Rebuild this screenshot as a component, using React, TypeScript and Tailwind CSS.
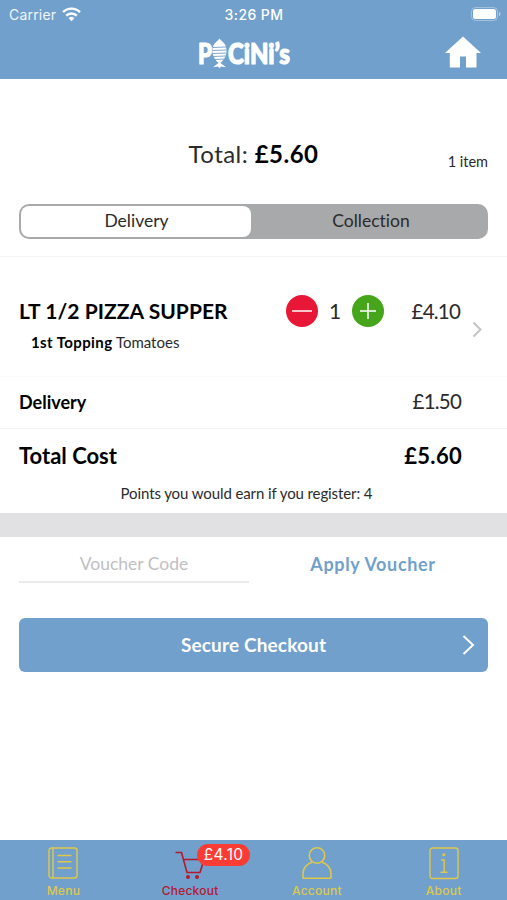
import { useState } from "react";
import type { ReactNode } from "react";

// ---------------------------------------------------------ICONS
const WifiIcon = () => (
  <svg width="19" height="15" viewBox="0 0 19 15" fill="none" stroke="white" strokeWidth="2.4">
    <path d="M1 5.2a12 12 0 0 1 17 0" />
    <path d="M4.2 8.7a7.5 7.5 0 0 1 10.6 0" />
    <path d="M9.5 14.2 6.6 11.2a4.2 4.2 0 0 1 5.8 0z" fill="white" stroke="none" />
  </svg>
);

const BatteryIcon = () => (
  <svg width="30" height="14" viewBox="0 0 30 14">
    <rect x="0.5" y="0.5" width="26" height="13" rx="4" fill="none" stroke="white" strokeOpacity="0.35" />
    <rect x="2" y="2" width="23" height="10" rx="2.5" fill="white" />
    <path d="M28 4.8c2 .8 2 3.6 0 4.4z" fill="white" fillOpacity="0.5" />
  </svg>
);

const HomeIcon = () => (
  <svg width="36" height="32" viewBox="0 0 36 32" fill="white">
    <path d="M18 0.5 36 17h-4.5v14.5H21V20.5h-6v11H4.8V17H0z" />
  </svg>
);

const Logo = () => (
  <svg
    width="98"
    height="46"
    viewBox="0 -4 98 46"
    fill="white"
    stroke="white"
    fontFamily="Lato, sans-serif"
    fontWeight="900"
    strokeWidth="1.2"
    strokeLinejoin="round"
  >
    <text x="2" y="27" fontSize="28" textLength="14" lengthAdjust="spacingAndGlyphs">P</text>
    <text x="32" y="27" fontSize="28" textLength="62" lengthAdjust="spacingAndGlyphs">CiNi’s</text>
    <path
      d="M23.500 1.500c1.500 2.500 7 4.500 7 12 0 6-3 10-6 12.500l5.500 4.200-5-.6-1.500 1.700-1.500-1.700-5 .6 5.500-4.200c-3-2.500-6-6.500-6-12.500 0-7.500 5.500-9.500 7-12z"
      stroke="none"
    />
    <path
      d="M17 10.500 30 10M16.500 13.500l14-.5M16.500 16.500l14-.5M17 19.500l13-.5M18.500 22.500l10.500-.5"
      stroke="#71a0cd"
      strokeWidth="0.9"
    />
  </svg>
);

const MenuIcon = () => (
  <svg width="30" height="33" viewBox="0 0 30 33" fill="none" stroke="currentColor" strokeWidth="1.400">
    <rect x="1" y="1" width="28" height="30" rx="2.500" />
    <path d="M5 1v30M9.500 8.500h14M9.500 14.800h14M9.500 21h14" />
  </svg>
);

const CartIcon = () => (
  <svg width="30" height="33" viewBox="0 0 30 33" fill="none" stroke="currentColor" strokeWidth="1.600">
    <path d="M0.500 5.500H6.500L12 25.500h13.500M8.500 12.500H29l-4 13" />
    <circle cx="13" cy="30" r="2" fill="currentColor" stroke="none" />
    <circle cx="22" cy="30" r="2" fill="currentColor" stroke="none" />
  </svg>
);

const AccountIcon = () => (
  <svg width="30" height="33" viewBox="0 0 30 33" fill="none" stroke="currentColor" strokeWidth="1.600">
    <circle cx="15" cy="8.500" r="7.700" />
    <path d="M10.500 15C4.500 17 1 21.500 1 27v3.500q0 .8.800.8h26.400q.8 0 .8-.8V27c0-5.500-3.500-10-9.500-12" />
  </svg>
);

const AboutIcon = () => (
  <svg width="30" height="33" viewBox="0 0 30 33" fill="none" stroke="currentColor" strokeWidth="1.400">
    <rect x="1" y="1" width="28" height="30.500" rx="2.500" />
    <path d="M12 13h3.200v12M11.500 25.200h7" />
    <circle cx="14.800" cy="7.700" r="1.500" fill="currentColor" stroke="none" />
  </svg>
);

// ---------------------------------------------------------COMPONENTS
const TabItem = ({
  label,
  icon,
  badge,
  active,
}: {
  label: string;
  icon: ReactNode;
  badge?: string;
  active?: boolean;
}) => (
  <button
    className={`flex flex-1 flex-col items-center pt-[7px] ${active ? "text-[#b5182f]" : "text-[#dfc84a]"}`}
  >
    <span className="relative">
      {icon}
      {badge && (
        <span className="absolute -top-[3px] left-[22px] flex h-[22px] w-[53px] items-center justify-center rounded-full bg-[#fb3c35] font-[Inter] text-[15.500px] tracking-[0.3px] text-white">
          {badge}
        </span>
      )}
    </span>
    <span className="mt-[3px] font-[Inter] text-[12px] leading-[16px] font-medium tracking-[0.25px]">
      {label}
    </span>
  </button>
);

export default function App() {
  const [method, setMethod] = useState("Delivery");
  const [qty, setQty] = useState(1);
  const [voucher, setVoucher] = useState("");

  return (
    <div className="flex h-[900px] w-[507px] flex-col overflow-hidden bg-white font-[Lato,sans-serif] text-[#2b2b2b] [font-variant-ligatures:none]">
      <header className="h-[79px] shrink-0 bg-[#71a0cd]">
        <div className="grid h-[28px] grid-cols-[1fr_auto_1fr] items-center pr-[6px] pl-[9px] font-[Inter] text-[14px] text-white">
          <div className="flex items-center gap-[6px]">
            <span className="tracking-[0.2px] opacity-90">Carrier</span>
            <WifiIcon />
          </div>
          <span className="pr-[2px] text-center font-medium tracking-[0.4px]">3:26 PM</span>
          <div className="flex justify-end">
            <BatteryIcon />
          </div>
        </div>
        <div className="grid h-[51px] grid-cols-[1fr_98px_1fr] pr-[26px] pl-[9px]">
          <div />
          <div className="pt-[5px]">
            <Logo />
          </div>
          <button className="self-start justify-self-end pt-[8px]">
            <HomeIcon />
          </button>
        </div>
      </header>

      <section className="h-[178px] shrink-0 border-b border-[#f3f3f3] px-[19px]">
        <div className="grid h-[125px] grid-cols-[1fr_auto_1fr] pt-[58px]">
          <span />
          <p className="text-[24px] leading-[34px] tracking-[0.45px] whitespace-nowrap">
            Total: <b className="text-black">£5.60</b>
          </p>
          <span className="pt-[15px] text-right text-[14.500px] leading-[20px]">1 item</span>
        </div>
        <div className="flex h-[35px] rounded-[10px] bg-[#a7a9aa] p-[2px] text-[17.500px] leading-none">
          <button
            onClick={() => setMethod("Delivery")}
            className={`w-[230px] rounded-[8px] pb-[1px] pl-[1px] ${method === "Delivery" ? "bg-white" : ""}`}
          >
            Delivery
          </button>
          <button
            onClick={() => setMethod("Collection")}
            className={`flex-1 rounded-[8px] pb-[1px] pl-[5px] ${method === "Collection" ? "bg-white" : ""}`}
          >
            Collection
          </button>
        </div>
      </section>

      <section className="flex h-[120px] shrink-0 border-b border-[#fafafa] pl-[19px]">
        <div className="w-[267px] pt-[40px]">
          <h2 className="text-[21px] leading-[28px] font-bold tracking-[0.05px] whitespace-nowrap text-black">
            LT 1/2 PIZZA SUPPER
          </h2>
          <p className="mt-[7px] ml-[12px] text-[15px] leading-[20px]">
            <b className="tracking-[0.4px] text-black">1st Topping</b> Tomatoes
          </p>
        </div>
        <div className="mt-[38px] flex h-[32px] items-center">
          <button
            onClick={() => setQty(Math.max(1, qty - 1))}
            className="flex size-[32px] items-center justify-center rounded-full bg-[#e91737]"
          >
            <svg width="20" height="20" stroke="white" strokeWidth="1.500">
              <path d="M0 10h20" />
            </svg>
          </button>
          <span className="w-[34px] text-center text-[21px]">{qty}</span>
          <button
            onClick={() => setQty(qty + 1)}
            className="flex size-[32px] items-center justify-center rounded-full bg-[#46a51a]"
          >
            <svg width="16" height="16" stroke="white" strokeWidth="1.500">
              <path d="M0 8h16M8 0v16" />
            </svg>
          </button>
          <span className="w-[76px] text-right text-[20.500px] tracking-[-0.8px]">£4.10</span>
        </div>
        <svg className="mt-[64px] ml-[12px]" width="11" height="17" fill="none" stroke="#c4c4c6" strokeWidth="2">
          <path d="M1.500 1.500 8.500 8.500 1.500 15.500" />
        </svg>
      </section>

      <section className="flex h-[52px] shrink-0 items-center justify-between border-b border-[#f3f3f3] pr-[46px] pl-[19px]">
        <span className="text-[18px] font-bold text-black">Delivery</span>
        <span className="pb-[2px] text-[20.500px] tracking-[-0.8px]">£1.50</span>
      </section>

      <section className="h-[84px] shrink-0">
        <div className="flex h-[53px] items-center justify-between pr-[45px] pl-[19px] text-[22px] font-bold text-black">
          <span>Total Cost</span>
          <span className="tracking-[0.3px]">£5.60</span>
        </div>
        <p className="pr-[14px] text-center text-[15px] leading-[22px] tracking-[-0.1px]">
          Points you would earn if you register: 4
        </p>
      </section>

      <div className="h-[24px] shrink-0 bg-[#e1e1e3]" />

      <section className="flex-1 px-[19px]">
        <div className="flex h-[46px]">
          <input
            value={voucher}
            onChange={(e) => setVoucher(e.target.value)}
            placeholder="Voucher Code"
            className="w-[230px] border-b-2 border-[#ebebec] pt-[11px] text-center text-[17.500px] outline-none placeholder:text-[#bfbfc2]"
          />
          <button className="ml-[9px] flex-1 pt-[8px] text-[18px] font-bold tracking-[0.65px] text-[#71a0cd]">
            Apply Voucher
          </button>
        </div>
        <button className="mt-[35px] grid h-[54px] w-full grid-cols-[1fr_auto_1fr] items-center rounded-[6px] bg-[#71a0cd] px-[13px] text-[19px] font-bold tracking-[0.15px] text-white">
          <span />
          <span>Secure Checkout</span>
          <svg className="justify-self-end" width="13" height="20" fill="none" stroke="white" strokeWidth="2">
            <path d="M1.500 1 11 10 1.500 19" />
          </svg>
        </button>
      </section>

      <nav className="flex h-[60px] shrink-0 bg-[#71a0cd]">
        <TabItem label="Menu" icon={<MenuIcon />} />
        <TabItem label="Checkout" icon={<CartIcon />} badge="£4.10" active />
        <TabItem label="Account" icon={<AccountIcon />} />
        <TabItem label="About" icon={<AboutIcon />} />
      </nav>
    </div>
  );
}
